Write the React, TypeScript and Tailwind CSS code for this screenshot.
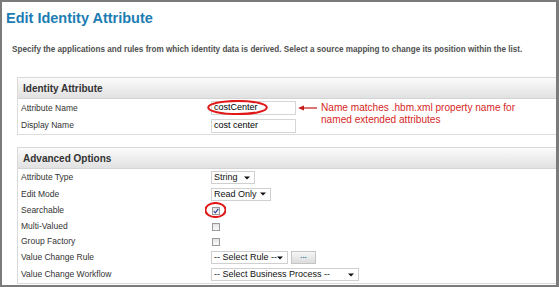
import React from "react";

function Ellipse({ className }: { className: string }) {
  return (
    <svg className={`pointer-events-none absolute ${className}`} viewBox="0 0 100 100" preserveAspectRatio="none">
      <ellipse cx="50" cy="50" rx="48" ry="44" fill="none" stroke="#e01818" strokeWidth="2" vectorEffect="non-scaling-stroke" />
    </svg>
  );
}

function Caret() {
  return (
    <svg className="h-[4px] w-[6px] shrink-0" viewBox="0 0 6 4">
      <path d="M0 0.5h6L3 3.5z" fill="#111" />
    </svg>
  );
}

function FakeSelect({ label, width }: { label: string; width: string }) {
  return (
    <div
      className={`flex h-[13px] items-center justify-between border border-[#cfcfcf] bg-white pl-[2px] pr-[4px] text-[9px] leading-none text-[#111] ${width}`}
    >
      <span>{label}</span>
      <Caret />
    </div>
  );
}

function Checkbox({ checked }: { checked?: boolean }) {
  return (
    <div className="flex h-[8px] w-[8px] items-center justify-center border border-[#9a9a9a] bg-gradient-to-b from-[#e4e4e4] to-[#fafafa]">
      {checked && (
        <svg className="h-[6px] w-[6px]" viewBox="0 0 6 6">
          <path d="M0.8 3.2L2.3 4.8L5.3 0.8" fill="none" stroke="#2b3f9e" strokeWidth="1.1" />
        </svg>
      )}
    </div>
  );
}

function PanelHeader({ title }: { title: string }) {
  return (
    <div className="flex h-[21px] items-center border-b border-[#d4d4d4] bg-gradient-to-b from-[#fbfbfb] to-[#e1e1e1] pl-[5px] text-[10px] font-bold text-[#333]">
      {title}
    </div>
  );
}

function Row({ label, h, children }: { label: string; h: string; children?: React.ReactNode }) {
  return (
    <div className={`relative grid grid-cols-[193px_1fr] items-center ${h}`}>
      <span className="pl-[3px] text-[8.5px] text-[#333]">{label}</span>
      <div className="flex items-center">{children}</div>
    </div>
  );
}

export default function App() {
  return (
    <div className="h-[287px] w-[559px] overflow-hidden border-b-2 border-l-2 border-r-[3px] border-t-2 border-[#7b7b7b] bg-white font-['Liberation_Sans',Arial,sans-serif]">
      <h1 className="ml-[4px] mt-[8px] text-[14.5px] font-bold leading-[17px] text-[#1c7db3]">Edit Identity Attribute</h1>
      <p className="ml-[10px] mt-[18px] whitespace-nowrap text-[8.15px] font-bold leading-[10px] text-[#505050]">
        Specify the applications and rules from which identity data is derived. Select a source mapping to change its position within the list.
      </p>

      <section className="ml-[15px] mt-[22px] border-l border-t border-[#dadada]">
        <PanelHeader title="Identity Attribute" />
        <Row label="Attribute Name" h="h-[18px]">
          <div className="relative">
            <div className="flex h-[14px] w-[85px] items-center border border-[#d6d6d6] pl-[2px] text-[9px] text-black">costCenter</div>
            <Ellipse className="-left-[4px] -top-[1px] h-[15px] w-[61px]" />
          </div>
          <div className="relative ml-[2px] h-[14px]">
            <svg className="mt-[4px] h-[6px] w-[19px]" viewBox="0 0 19 6">
              <path d="M0 3L6 0.5V5.5Z" fill="#c41a1a" />
              <path d="M5 3H19" stroke="#c41a1a" strokeWidth="1.2" />
            </svg>
            <p className="absolute left-[23px] top-[1px] w-[220px] text-[10.1px] leading-[12px] text-[#d61f26]">
              Name matches .hbm.xml property name for named extended attributes
            </p>
          </div>
        </Row>
        <Row label="Display Name" h="h-[17px]">
          <div className="flex h-[14px] w-[85px] items-center border border-[#d6d6d6] pl-[2px] text-[9px] text-black">cost center</div>
        </Row>
        <div className="border-b border-[#dcdcdc]" />
      </section>

      <section className="ml-[15px] mt-[12px] border-b border-l border-t border-[#dadada]">
        <PanelHeader title="Advanced Options" />
        <Row label="Attribute Type" h="h-[17px]">
          <FakeSelect label="String" width="w-[44px]" />
        </Row>
        <Row label="Edit Mode" h="h-[16px]">
          <FakeSelect label="Read Only" width="w-[60px]" />
        </Row>
        <Row label="Searchable" h="h-[17px]">
          <div className="relative ml-[1px]">
            <Checkbox checked />
            <Ellipse className="-left-[7px] -top-[5px] h-[16px] w-[21px]" />
          </div>
        </Row>
        <Row label="Multi-Valued" h="h-[15px]">
          <div className="ml-[1px]">
            <Checkbox />
          </div>
        </Row>
        <Row label="Group Factory" h="h-[15px]">
          <div className="ml-[1px]">
            <Checkbox />
          </div>
        </Row>
        <Row label="Value Change Rule" h="h-[17px]">
          <FakeSelect label="-- Select Rule --" width="w-[77px]" />
          <button
            type="button"
            className="ml-[3px] flex h-[13px] w-[25px] items-center justify-center border border-[#c4c4c4] bg-gradient-to-b from-[#f6f6f6] to-[#dcdcdc] pb-[4px] text-[8px] font-bold leading-none text-[#3a78a8]"
          >
            ...
          </button>
        </Row>
        <Row label="Value Change Workflow" h="h-[17px]">
          <FakeSelect label="-- Select Business Process --" width="w-[148px]" />
        </Row>
      </section>
    </div>
  );
}
